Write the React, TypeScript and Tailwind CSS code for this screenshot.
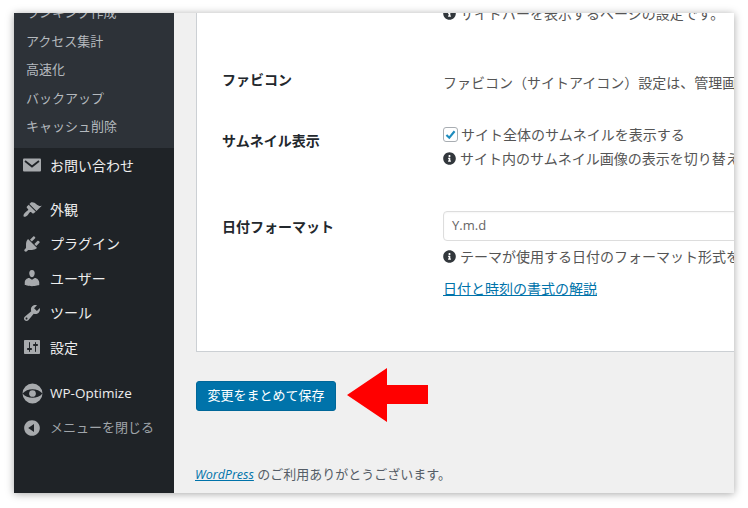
import { FaInfoCircle } from "react-icons/fa";

const submenu = ["ランキング作成", "アクセス集計", "高速化", "バックアップ", "キャッシュ削除"];

const paths = {
  brush: "M14.48 11.06L7.41 3.99l1.5-1.5c.5-.56 2.3-.47 3.51.32 1.21.8 1.43 1.28 2.91 2.1 1.18.64 2.45 1.26 4.45.85zm-.71.71L6.7 4.7 4.93 6.47c-.39.39-.39 1.02 0 1.41l1.06 1.06c.39.39.39 1.03 0 1.42-.6.6-1.43 1.11-2.21 1.69-.35.26-.7.53-1.01.84-1.27 1.27-1.58 3.08-1.06 3.6.52.52 2.33.21 3.6-1.06.31-.31.58-.66.84-1.01.58-.78 1.09-1.61 1.69-2.21.39-.39 1.03-.39 1.42 0l1.06 1.06c.39.39 1.02.39 1.41 0z",
  plugin: "M13.11 4.36L9.87 7.6 8 5.73l3.24-3.24c.35-.34 1.05-.2 1.56.32.52.51.66 1.21.31 1.55zm-8 1.77l.91-1.12 9.01 9.01-1.19.84c-.71.71-2.63 1.16-3.82 1.16H6.14L4.9 17.26c-.59.59-1.54.59-2.12 0-.59-.58-.59-1.53 0-2.12l1.24-1.24v-3.88c0-1.13.4-3.19 1.09-3.89zm7.26 3.97l3.24-3.24c.34-.35 1.04-.21 1.55.31.52.51.66 1.21.31 1.55l-3.24 3.25z",
  user: "M10 9.25c-2.27 0-2.73-3.44-2.73-3.44C7 4.02 7.82 2 9.97 2c2.16 0 2.98 2.02 2.71 3.81 0 0-.41 3.44-2.68 3.44zm0 2.57L12.72 10c2.39 0 4.52 2.33 4.52 4.53v2.49s-3.65 1.13-7.24 1.13c-3.65 0-7.24-1.13-7.24-1.13v-2.49c0-2.25 1.94-4.48 4.47-4.48z",
  tool: "M16.68 9.77c-1.34 1.34-3.3 1.67-4.95.99l-5.41 6.52c-.99.99-2.59.99-3.58 0s-.99-2.59 0-3.57l6.52-5.42c-.68-1.65-.35-3.61.99-4.95 1.28-1.28 3.12-1.62 4.72-1.06l-2.89 2.89 2.82 2.82 2.86-2.87c.53 1.58.18 3.39-1.08 4.65zM3.81 16.21c.4.39 1.04.39 1.43 0 .4-.4.4-1.04 0-1.43-.39-.4-1.03-.4-1.43 0-.39.39-.39 1.03 0 1.43z",
  settings: "M18 16V4c0-.55-.45-1-1-1H3c-.55 0-1 .45-1 1v12c0 .55.45 1 1 1h14c.55 0 1-.45 1-1zM8 11h1c.55 0 1 .45 1 1s-.45 1-1 1H8v1.5c0 .28-.22.5-.5.5s-.5-.22-.5-.5V13H6c-.55 0-1-.45-1-1s.45-1 1-1h1V5.5c0-.28.22-.5.5-.5s.5.22.5.5V11zm5-2h-1c-.55 0-1-.45-1-1s.45-1 1-1h1V5.5c0-.28.22-.5.5-.5s.5.22.5.5V7h1c.55 0 1 .45 1 1s-.45 1-1 1h-1v5.5c0 .28-.22.5-.5.5s-.5-.22-.5-.5V9z",
  collapse: "M10 2.16c4.33 0 7.84 3.51 7.84 7.84s-3.51 7.84-7.84 7.84S2.16 14.33 2.16 10 5.71 2.16 10 2.16zm2 11.72V6.12L6.18 9.97z",
};

function MenuIcon({ d }: { d: string }) {
  return (
    <svg viewBox="0 0 20 20" className="h-5 w-5 shrink-0 fill-[#a7aaad]">
      <path d={d} />
    </svg>
  );
}

function MailIcon() {
  return (
    <svg viewBox="0 0 20 20" className="h-5 w-5 shrink-0">
      <rect x="1" y="3.5" width="18" height="13" rx="1" fill="#a7aaad" />
      <polyline points="3,6 10,11.5 17,6" fill="none" stroke="#1f2327" strokeWidth="1.8" />
    </svg>
  );
}

function OptimizeIcon() {
  return (
    <svg viewBox="0 0 20 20" className="h-[21px] w-[21px] shrink-0 fill-[#a7aaad]">
      <path d="M0.5 10A9.5 9.5 0 0 1 19.5 10C15 4.5 5 4.5 0.5 10Z" />
      <path d="M0.5 10A9.5 9.5 0 0 0 19.5 10C15 15.5 5 15.5 0.5 10Z" />
      <circle cx="10" cy="10" r="3.2" />
    </svg>
  );
}

function MenuRow({ icon, label }: { icon: React.ReactNode; label: string }) {
  return (
    <div className="flex h-[34.4px] items-center gap-[8px] pl-[8px] text-[14px] text-[#eeeeee]">
      {icon}
      <span>{label}</span>
    </div>
  );
}

function Hint({ text }: { text: string }) {
  return (
    <div className="flex h-6 items-center gap-[4px] text-[14px] text-[#555555]">
      <FaInfoCircle className="h-[13px] w-[13px] shrink-0 text-[#32373c]" />
      <span>{text}</span>
    </div>
  );
}

export default function App() {
  return (
    <div className="h-[508px] w-[748px] overflow-hidden bg-white pl-[14px] pt-[13px] font-['Open_Sans','Noto_Sans_CJK_JP',sans-serif]">
      <div className="flex h-[480px] w-[720px] overflow-hidden bg-[#f0f0f0] shadow-[0_1px_8px_rgba(0,0,0,0.35)]">
        {/* Sidebar */}
        <aside className="w-[160px] shrink-0 bg-[#1f2327]">
          <div className="-mt-[14px] bg-[#2d3238] pb-[7px]">
            {submenu.map((item) => (
              <div key={item} className="flex h-[28.4px] items-center pl-[12px] text-[13px] text-[#b4b9be]">
                {item}
              </div>
            ))}
          </div>
          <MenuRow icon={<MailIcon />} label="お問い合わせ" />
          <div className="mt-[10px]">
            <MenuRow icon={<MenuIcon d={paths.brush} />} label="外観" />
            <MenuRow icon={<MenuIcon d={paths.plugin} />} label="プラグイン" />
            <MenuRow icon={<MenuIcon d={paths.user} />} label="ユーザー" />
            <MenuRow icon={<MenuIcon d={paths.tool} />} label="ツール" />
            <MenuRow icon={<MenuIcon d={paths.settings} />} label="設定" />
          </div>
          <div className="mt-[12px] flex h-[34.4px] items-center gap-[7px] pl-[8px] text-[13.5px] text-[#eeeeee]">
            <OptimizeIcon />
            <span>WP-Optimize</span>
          </div>
          <div className="flex h-[34.4px] items-center gap-[8px] pl-[8px] text-[13px] text-[#a0a5aa]">
            <MenuIcon d={paths.collapse} />
            <span>メニューを閉じる</span>
          </div>
        </aside>

        {/* Main column */}
        <main className="min-w-0 flex-1 overflow-hidden pl-[22px]">
          <div className="-mt-[13px] w-[700px] border border-[#ccd0d4] bg-white pb-[50px] pl-[25px] text-[14px] whitespace-nowrap">
            <div className="flex">
              <div className="w-[221px] shrink-0" />
              <Hint text="サイドバーを表示するページの設定です。" />
            </div>

            <div className="mt-[43px] flex">
              <div className="w-[221px] shrink-0 font-bold leading-6 text-[#23282d]">ファビコン</div>
              <div className="mt-[3px] leading-6 text-[#555555]">
                ファビコン（サイトアイコン）設定は、管理画面の「外観」から行えます。
              </div>
            </div>

            <div className="mt-[27px] flex">
              <div className="mt-[7px] w-[221px] shrink-0 font-bold leading-6 text-[#23282d]">サムネイル表示</div>
              <div>
                <label className="flex h-6 items-center gap-[3px] text-[#555555]">
                  <span className="flex h-[15px] w-[15px] items-center justify-center rounded-[3px] border border-[#a8adb2] bg-white">
                    <svg viewBox="0 0 16 16" className="h-[13px] w-[13px]">
                      <path d="M3 8.5L6.5 12L13 4" fill="none" stroke="#1e8cbe" strokeWidth="2.6" />
                    </svg>
                  </span>
                  サイト全体のサムネイルを表示する
                </label>
                <Hint text="サイト内のサムネイル画像の表示を切り替えます。" />
              </div>
            </div>

            <div className="mt-[41px] flex">
              <div className="mt-[4px] w-[221px] shrink-0 font-bold leading-6 text-[#23282d]">日付フォーマット</div>
              <div>
                <div className="flex h-[30px] w-[400px] items-center rounded-[4px] border border-[#dddddd] bg-white pl-[8px] text-[13px] text-[#666666] shadow-[inset_0_1px_2px_rgba(0,0,0,0.04)]">
                  Y.m.d
                </div>
                <div className="mt-[3px]">
                  <Hint text="テーマが使用する日付のフォーマット形式を設定します。" />
                </div>
                <a className="mt-[9px] block leading-6 text-[#0073aa] underline">日付と時刻の書式の解説</a>
              </div>
            </div>
          </div>

          <div className="mt-[29px] flex h-[30px] items-center">
            <button className="h-[30px] w-[140px] shrink-0 rounded-[3px] border border-[#006799] bg-[#0073aa] text-[13px] text-white">
              変更をまとめて保存
            </button>
            <svg viewBox="0 0 81 54" className="ml-[11px] -mt-[2px] h-[54px] w-[81px] shrink-0">
              <polygon points="0,27 40,0 40,17 81,17 81,36 40,36 40,54" fill="#ff0000" />
            </svg>
          </div>

          <p className="-ml-[1px] mt-[51px] text-[13px] leading-6 text-[#555d66]">
            <a className="text-[12.5px] italic text-[#0073aa] underline">WordPress</a> のご利用ありがとうございます。
          </p>
        </main>
      </div>
    </div>
  );
}
